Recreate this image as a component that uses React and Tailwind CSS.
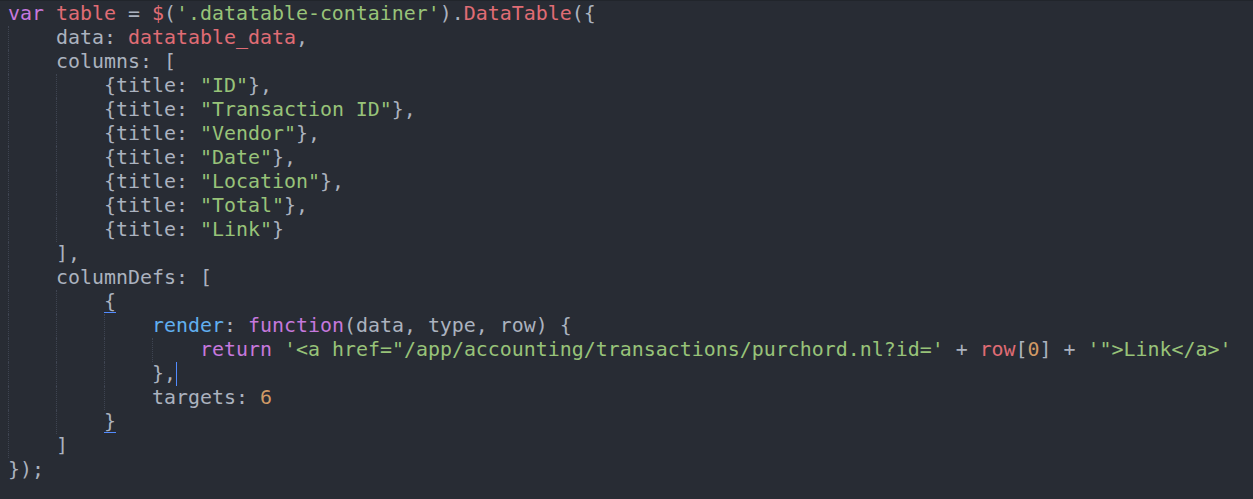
const P = "text-[#abb2bf]"
const R = "text-[#e06c75]"
const G = "text-[#98c379]"
const K = "text-[#c678dd]"
const B = "text-[#61afef]"
const O = "text-[#d19a66]"

const titles = ["ID", "Transaction ID", "Vendor", "Date", "Location", "Total", "Link"]

const lines = [
  { indent: 0, tokens: [[K, "var"], [P, " "], [R, "table"], [P, " = "], [R, "$"], [P, "("], [G, "'.datatable-container'"], [P, ")."], [R, "DataTable"], [P, "({"]] },
  { indent: 1, tokens: [[P, "data: "], [R, "datatable_data"], [P, ","]] },
  { indent: 1, tokens: [[P, "columns: ["]] },
  ...titles.map((t, i) => ({
    indent: 2,
    tokens: [[P, "{title: "], [G, `"${t}"`], [P, i < titles.length - 1 ? "}," : "}"]],
  })),
  { indent: 1, tokens: [[P, "],"]] },
  { indent: 1, tokens: [[P, "columnDefs: ["]] },
  { indent: 2, tokens: [[P, "{", true]] },
  { indent: 3, tokens: [[B, "render"], [P, ": "], [K, "function"], [P, "(data, type, row) {"]] },
  {
    indent: 4,
    tokens: [
      [K, "return"], [P, " "],
      [G, `'<a href="/app/accounting/transactions/purchord.nl?id='`],
      [P, " + "], [R, "row"], [P, "["], [O, "0"], [P, "]"], [P, " + "],
      [G, `'">Link</a>'`],
    ],
  },
  { indent: 3, tokens: [[P, "},"]], cursor: true },
  { indent: 3, tokens: [[P, "targets: "], [O, "6"]] },
  { indent: 2, tokens: [[P, "}", true]] },
  { indent: 1, tokens: [[P, "]"]] },
  { indent: 0, tokens: [[P, "});"]] },
]

const CodeLine = ({ line }) => (
  <div className="flex h-[24px] items-center whitespace-pre pl-[8px]">
    {Array.from({ length: line.indent }).map((_, i) => (
      <span key={i} className="inline-block h-[24px] w-[48px] shrink-0 border-l border-dotted border-[#3e4451]" />
    ))}
    {line.tokens.map(([cls, text, underline], i) => (
      <span
        key={i}
        className={`${cls} ${underline ? "border-b border-[#528bff] leading-[20px]" : ""}`}
      >
        {text}
      </span>
    ))}
    {line.cursor && <span className="inline-block h-[24px] w-px bg-[#528bff]" />}
  </div>
)

export default function App() {
  return (
    <div className="h-[499px] w-[1253px] overflow-hidden border-t border-[#21252b] bg-[#282c34] pt-[1px] font-['DejaVu_Sans_Mono',monospace] text-[19.93px]">
      {lines.map((line, i) => (
        <CodeLine key={i} line={line} />
      ))}
    </div>
  )
}
